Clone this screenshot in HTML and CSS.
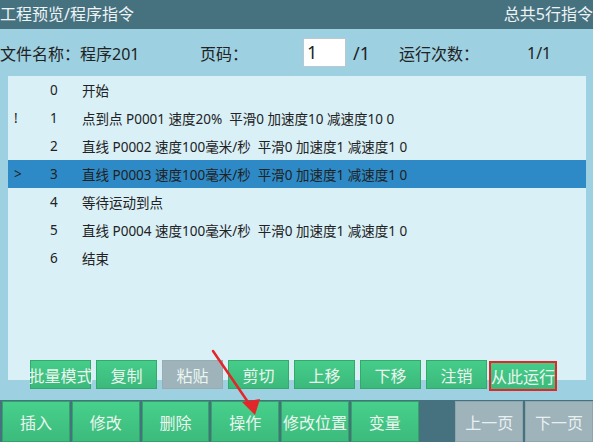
FILE: index.html
```html
<!DOCTYPE html>
<html lang="zh-CN">
<head>
  <meta charset="UTF-8" />
  <title>工程预览/程序指令</title>
  <link rel="stylesheet" href="styles.css">
</head>
<body>
  <div class="screen">
    <div class="titlebar">
      <span>工程预览/程序指令</span>
      <span>总共5行指令</span>
    </div>

    <div class="main">
      <div class="info">
        <span class="file-name">文件名称：程序201</span>
        <span class="page-label">页码：</span>
        <span class="page-box">1</span>
        <span class="page-total">/1</span>
        <span class="run-label">运行次数：</span>
        <span class="run-count">1/1</span>
      </div>

      <div class="list">
        <div class="row"><span class="mark"></span><span class="num">0</span><span class="cmd">开始</span></div>
        <div class="row"><span class="mark">!</span><span class="num">1</span><span class="cmd">点到点 P0001 速度20%  平滑0 加速度10 减速度10 0</span></div>
        <div class="row"><span class="mark"></span><span class="num">2</span><span class="cmd">直线 P0002 速度100毫米/秒  平滑0 加速度1 减速度1 0</span></div>
        <div class="row selected"><span class="mark">&gt;</span><span class="num">3</span><span class="cmd">直线 P0003 速度100毫米/秒  平滑0 加速度1 减速度1 0</span></div>
        <div class="row"><span class="mark"></span><span class="num">4</span><span class="cmd">等待运动到点</span></div>
        <div class="row"><span class="mark"></span><span class="num">5</span><span class="cmd">直线 P0004 速度100毫米/秒  平滑0 加速度1 减速度1 0</span></div>
        <div class="row"><span class="mark"></span><span class="num">6</span><span class="cmd">结束</span></div>
      </div>

      <div class="tools">
        <button class="tool">批量模式</button>
        <button class="tool">复制</button>
        <button class="tool off">粘贴</button>
        <button class="tool">剪切</button>
        <button class="tool">上移</button>
        <button class="tool">下移</button>
        <button class="tool">注销</button>
        <div class="marked"><button class="tool">从此运行</button></div>
      </div>
    </div>

    <div class="bottombar">
      <button class="nav">插入</button>
      <button class="nav">修改</button>
      <button class="nav">删除</button>
      <button class="nav">操作</button>
      <button class="nav">修改位置</button>
      <button class="nav">变量</button>
      <span class="spacer"></span>
      <button class="nav off">上一页</button>
      <button class="nav off">下一页</button>
    </div>

    <!-- annotation arrow pointing at 操作 -->
    <svg class="arrow" width="593" height="442" viewBox="0 0 593 442">
      <line x1="213" y1="351" x2="250" y2="405" stroke="#e3262a" stroke-width="2.5" stroke-linecap="round"/>
      <polygon points="255,415 242,402 260,399" fill="#e3262a"/>
    </svg>
  </div>
</body>
</html>
```

FILE: styles.css
```css
body {
  margin: 0;
  font-family: "Noto Sans", "Noto Sans CJK SC", sans-serif;
}
.screen {
  position: relative;
  width: 593px;
  height: 442px;
  overflow: hidden;
  background-color: #9dd0e1;
}
.titlebar {
  height: 29px;
  background-color: #46717f;
  color: #eef4f6;
  font-size: 16px;
  display: flex;
  justify-content: space-between;
  align-items: center;
  line-height: 29px;
}
.main {
  height: 371px;
  display: flex;
  flex-direction: column;
}
.info {
  height: 47px;
  display: flex;
  align-items: center;
  font-size: 16px;
  color: #222;
}
.file-name {
  width: 200px;
}
.page-label {
  width: 103px;
}
.page-box {
  width: 38px;
  height: 27px;
  background-color: #fff;
  border: 1px solid #b9c9cf;
  padding-left: 3px;
  line-height: 27px;
  font-size: 18px;
}
.page-total {
  width: 46px;
  margin-left: 7px;
  font-size: 18px;
}
.run-label {
  width: 128px;
}
.list {
  height: 304px;
  margin: 0 7px 0 8px;
  background-color: #d9f0f7;
  font-size: 13.5px;
  color: #222;
}
.row {
  height: 28px;
  display: flex;
  align-items: center;
  white-space: pre;
}
.row.selected {
  background-color: #2e8ac6;
}
.mark {
  width: 42px;
  padding-left: 6px;
  box-sizing: border-box;
}
.num {
  width: 32px;
}
.tools {
  margin-top: -20px;
  padding-left: 30px;
  display: flex;
  gap: 5px;
  align-items: flex-start;
}
.tool {
  width: 61px;
  height: 29px;
  padding: 0;
  border: 1px solid #35a86c;
  background: linear-gradient(#46cd8a, #3bb97b);
  color: #eaf6ef;
  font-family: inherit;
  font-size: 16px;
  white-space: nowrap;
  display: flex;
  justify-content: center;
  align-items: center;
}
.tool.off {
  background: #9eb3ba;
  border-color: #96adb4;
}
.marked {
  margin-left: -3px;
  margin-top: 1px;
  border: 2px solid #e3262a;
}
.marked .tool {
  width: 64px;
  height: 26px;
  border: none;
}
.bottombar {
  height: 42px;
  box-sizing: border-box;
  padding: 1px 0 0 2px;
  background-color: #46717f;
  display: flex;
  gap: 2px;
}
.nav {
  width: 68px;
  height: 41px;
  padding: 0;
  border: 1px solid #33a469;
  background: linear-gradient(#47d08c, #3cbb7c);
  color: #eaf6ef;
  font-family: inherit;
  font-size: 16px;
  white-space: nowrap;
}
.nav.off {
  background: #9eb3ba;
  border-color: #8fa5ad;
  color: #e9f0f2;
}
.spacer {
  width: 33px;
}
.arrow {
  position: absolute;
  left: 0;
  top: 0;
  pointer-events: none;
}
```
